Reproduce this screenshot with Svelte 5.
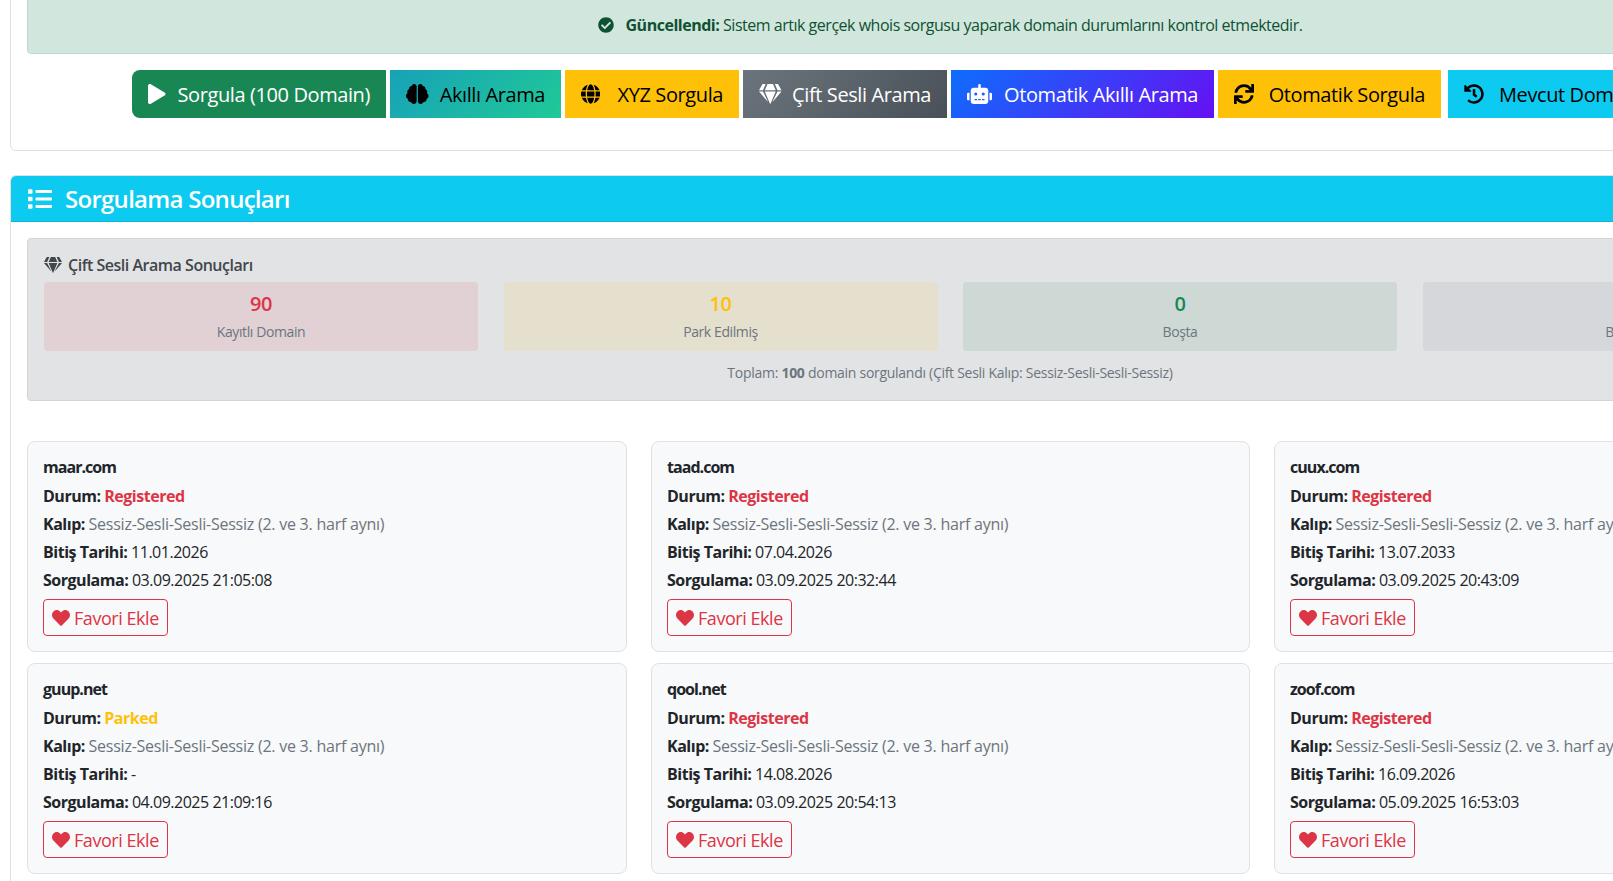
<script>
	const icons = {
		check: [512, 'M504 256c0 136.967-111.033 248-248 248S8 392.967 8 256 119.033 8 256 8s248 111.033 248 248zM227.314 387.314l184-184c6.248-6.248 6.248-16.379 0-22.627l-22.627-22.627c-6.248-6.249-16.379-6.249-22.628 0L216 308.118l-70.059-70.059c-6.248-6.248-16.379-6.248-22.628 0l-22.627 22.627c-6.248 6.248-6.248 16.379 0 22.627l104 104c6.249 6.249 16.379 6.249 22.628.001z'],
		play: [448, 'M424.4 214.7L72.4 6.6C43.8-10.3 0 6.1 0 47.9V464c0 37.5 40.7 60.1 72.4 41.3l352-208c31.4-18.5 31.5-64.1 0-82.6z'],
		list: [512, 'M80 368H16a16 16 0 0 0-16 16v64a16 16 0 0 0 16 16h64a16 16 0 0 0 16-16v-64a16 16 0 0 0-16-16zm0-320H16A16 16 0 0 0 0 64v64a16 16 0 0 0 16 16h64a16 16 0 0 0 16-16V64a16 16 0 0 0-16-16zm0 160H16a16 16 0 0 0-16 16v64a16 16 0 0 0 16 16h64a16 16 0 0 0 16-16v-64a16 16 0 0 0-16-16zm416 176H176a16 16 0 0 0-16 16v32a16 16 0 0 0 16 16h320a16 16 0 0 0 16-16v-32a16 16 0 0 0-16-16zm0-320H176a16 16 0 0 0-16 16v32a16 16 0 0 0 16 16h320a16 16 0 0 0 16-16V80a16 16 0 0 0-16-16zm0 160H176a16 16 0 0 0-16 16v32a16 16 0 0 0 16 16h320a16 16 0 0 0 16-16v-32a16 16 0 0 0-16-16z'],
		heart: [512, 'M462.3 62.6C407.5 15.9 326 24.3 275.7 76.2L256 96.5l-19.7-20.3C186.1 24.3 104.5 15.9 49.7 62.6c-62.8 53.6-66.1 149.8-9.9 207.9l193.5 199.8c12.5 12.9 32.8 12.9 45.3 0l193.5-199.8c56.3-58.1 53-154.3-9.8-207.9z'],
		gem: [576, 'M485.5 0L576 160H474.9L405.7 0h79.8zm-128 0l69.2 160H149.3L218.5 0h139zm-267 0h79.8l-69.2 160H0L90.5 0zM0 192h100.7l123 251.7c1.5 3.1-2.7 5.9-5 3.3L0 192zm148.2 0h279.6l-137 318.2c-1 2.4-4.5 2.4-5.5 0L148.2 192zm204.1 251.7l123-251.7H576L357.3 446.9c-2.3 2.7-6.5-.1-5-3.2z'],
		sync: [512, 'M440.65 12.57l4 82.77A247.16 247.16 0 0 0 255.83 8C134.73 8 33.91 94.92 12.29 209.82A12 12 0 0 0 24.09 224h49.05a12 12 0 0 0 11.67-9.26 175.91 175.91 0 0 1 317-56.94l-101.46-4.86a12 12 0 0 0-12.57 12v47.41a12 12 0 0 0 12 12H500a12 12 0 0 0 12-12V12a12 12 0 0 0-12-12h-47.37a12 12 0 0 0-11.98 12.57zM255.83 432a175.61 175.61 0 0 1-146-77.8l101.8 4.87a12 12 0 0 0 12.57-12v-47.4a12 12 0 0 0-12-12H12a12 12 0 0 0-12 12V500a12 12 0 0 0 12 12h47.35a12 12 0 0 0 12-12.6l-4.15-82.57A247.17 247.17 0 0 0 255.83 504c121.11 0 221.93-86.92 243.55-201.82a12 12 0 0 0-11.8-14.18h-49.05a12 12 0 0 0-11.67 9.26A175.86 175.86 0 0 1 255.83 432z'],
		history: [512, 'M504 255.531c.253 136.64-111.18 248.372-247.82 248.468-59.015.042-113.223-20.53-155.822-54.911-11.077-8.94-11.905-25.541-1.839-35.607l11.267-11.267c8.609-8.609 22.353-9.551 31.891-1.984C173.062 425.135 212.781 440 256 440c101.705 0 184-82.311 184-184 0-101.705-82.311-184-184-184-48.814 0-93.149 18.969-126.068 49.932l50.754 50.754c10.08 10.08 2.941 27.314-11.313 27.314H24c-8.837 0-16-7.163-16-16V38.627c0-14.254 17.234-21.393 27.314-11.314l49.372 49.372C129.209 34.136 189.552 8 256 8c136.81 0 247.747 110.78 248 247.531zm-180.912 78.784l9.823-12.63c8.138-10.463 6.253-25.542-4.21-33.679L288 256.349V152c0-13.255-10.745-24-24-24h-16c-13.255 0-24 10.745-24 24v135.651l65.409 50.874c10.463 8.137 25.541 6.253 33.679-4.21z'],
		robot: [640, 'M32,224H64V416H32A31.96166,31.96166,0,0,1,0,384V256A31.96166,31.96166,0,0,1,32,224Zm512-48V448a64.06328,64.06328,0,0,1-64,64H160a64.06328,64.06328,0,0,1-64-64V176a79.974,79.974,0,0,1,80-80H288V32a32,32,0,0,1,64,0V96H464A79.974,79.974,0,0,1,544,176ZM264,256a40,40,0,1,0-40,40A39.997,39.997,0,0,0,264,256Zm-8,128H192v32h64Zm96,0H288v32h64ZM456,256a40,40,0,1,0-40,40A39.997,39.997,0,0,0,456,256Zm-8,128H384v32h64ZM640,256V384a31.96166,31.96166,0,0,1-32,32H576V224h32A31.96166,31.96166,0,0,1,640,256Z'],
		globe: [496, 'M336.5 160C322 70.7 287.8 8 248 8s-74 62.7-88.5 152h177zM152 256c0 22.2 1.2 43.5 3.3 64h185.3c2.1-20.5 3.3-41.8 3.3-64s-1.2-43.5-3.3-64H155.3c-2.1 20.5-3.3 41.8-3.3 64zm324.7-96c-28.6-67.9-86.5-120.4-158-141.6 24.4 33.8 41.2 84.7 50 141.6h108zM177.2 18.4C105.8 39.6 47.8 92.1 19.3 160h108c8.7-56.9 25.5-107.8 49.9-141.6zM487.4 192H372.7c2.1 21 3.3 42.5 3.3 64s-1.2 43-3.3 64h114.6c5.5-20.5 8.6-41.8 8.6-64s-3.1-43.5-8.5-64zM120 256c0-21.5 1.2-43 3.3-64H8.6C3.2 212.5 0 233.8 0 256s3.2 43.5 8.6 64h114.6c-2-21-3.2-42.5-3.2-64zm39.5 96c14.5 89.3 48.7 152 88.5 152s74-62.7 88.5-152h-177zm159.3 141.6c71.4-21.2 129.4-73.7 158-141.6h-108c-8.8 56.9-25.6 107.8-50 141.6zM19.3 352c28.6 67.9 86.5 120.4 158 141.6-24.4-33.8-41.2-84.7-50-141.6h-108z'],
		brain: [576, 'M208 0c-29.9 0-54.7 20.5-61.8 48.2-.8 0-1.4-.2-2.2-.2-35.3 0-64 28.7-64 64 0 4.8.6 9.5 1.7 14C52.5 138 32 166.6 32 200c0 12.6 3.2 24.3 8.3 34.9C16.3 248.7 0 274.3 0 304c0 33.3 20.4 61.9 49.4 73.9-.9 4.6-1.4 9.3-1.4 14.1 0 39.8 32.2 72 72 72 4.1 0 8.1-.5 12-1.2 9.6 28.5 36.2 49.2 68 49.2 39.8 0 72-32.2 72-72V64c0-35.3-28.7-64-64-64zm368 304c0-29.7-16.3-55.3-40.3-69.1 5.2-10.6 8.3-22.3 8.3-34.9 0-33.4-20.5-62-49.7-74 1-4.5 1.7-9.2 1.7-14 0-35.3-28.7-64-64-64-.8 0-1.5.2-2.2.2C422.7 20.5 397.9 0 368 0c-35.3 0-64 28.6-64 64v376c0 39.8 32.2 72 72 72 31.8 0 58.4-20.7 68-49.2 3.9.7 7.9 1.2 12 1.2 39.8 0 72-32.2 72-72 0-4.8-.5-9.5-1.4-14.1 29-12 49.4-40.6 49.4-73.9z']
	};

	const buttons = [
		{ label: 'Sorgula (100 Domain)', icon: 'play', cls: 'green' },
		{ label: 'Akıllı Arama', icon: 'brain', cls: 'teal' },
		{ label: 'XYZ Sorgula', icon: 'globe', cls: 'yellow' },
		{ label: 'Çift Sesli Arama', icon: 'gem', cls: 'grey' },
		{ label: 'Otomatik Akıllı Arama', icon: 'robot', cls: 'violet' },
		{ label: 'Otomatik Sorgula', icon: 'sync', cls: 'yellow' },
		{ label: 'Mevcut Domainleri Sorgula', icon: 'history', cls: 'cyan' }
	];

	const stats = [
		{ value: 90, label: 'Kayıtlı Domain', cls: 'danger' },
		{ value: 10, label: 'Park Edilmiş', cls: 'warning' },
		{ value: 0, label: 'Boşta', cls: 'success' },
		{ value: 0, label: 'Bilinmeyen', cls: 'muted' }
	];

	const domains = [
		{ name: 'maar.com', status: 'Registered', end: '11.01.2026', query: '03.09.2025 21:05:08' },
		{ name: 'taad.com', status: 'Registered', end: '07.04.2026', query: '03.09.2025 20:32:44' },
		{ name: 'cuux.com', status: 'Registered', end: '13.07.2033', query: '03.09.2025 20:43:09' },
		{ name: 'guup.net', status: 'Parked', end: '-', query: '04.09.2025 21:09:16' },
		{ name: 'qool.net', status: 'Registered', end: '14.08.2026', query: '03.09.2025 20:54:13' },
		{ name: 'zoof.com', status: 'Registered', end: '16.09.2026', query: '05.09.2025 16:53:03' }
	];
</script>

{#snippet icon(name)}
	<svg class="icon" viewBox="0 0 {icons[name][0]} 512" fill="currentColor" aria-hidden="true">
		<path d={icons[name][1]} />
	</svg>
{/snippet}

<div class="viewport">
	<div class="page">
		<section class="card searchCard">
			<div class="alert">
				{@render icon('check')}
				<span><strong>Güncellendi:</strong> Sistem artık gerçek whois sorgusu yaparak domain durumlarını kontrol etmektedir.</span>
			</div>
			<div class="actions">
				{#each buttons as button}
					<button class="action {button.cls}">
						{@render icon(button.icon)}
						<span>{button.label}</span>
					</button>
				{/each}
			</div>
		</section>

		<section class="card results">
			<header class="resultsHeader">
				{@render icon('list')}
				<h2>Sorgulama Sonuçları</h2>
			</header>
			<div class="resultsBody">
				<div class="summary">
					<h6>{@render icon('gem')} <span>Çift Sesli Arama Sonuçları</span></h6>
					<div class="stats">
						{#each stats as stat}
							<div class="stat {stat.cls}">
								<div class="statValue">{stat.value}</div>
								<div class="statLabel">{stat.label}</div>
							</div>
						{/each}
					</div>
					<p class="total">Toplam: <strong>100</strong> domain sorgulandı (Çift Sesli Kalıp: Sessiz-Sesli-Sesli-Sessiz)</p>
				</div>

				<div class="domains">
					{#each domains as domain}
						<article class="domain">
							<div class="line name"><strong>{domain.name}</strong></div>
							<div class="line">
								<strong>Durum:</strong>
								<strong class={domain.status === 'Parked' ? 'parked' : 'registered'}>{domain.status}</strong>
							</div>
							<div class="line"><strong>Kalıp:</strong> <span class="pattern">Sessiz-Sesli-Sesli-Sessiz (2. ve 3. harf aynı)</span></div>
							<div class="line"><strong>Bitiş Tarihi:</strong> {domain.end}</div>
							<div class="line"><strong>Sorgulama:</strong> {domain.query}</div>
							<button class="favorite">{@render icon('heart')}<span>Favori Ekle</span></button>
						</article>
					{/each}
				</div>
			</div>
		</section>
	</div>
</div>

<style>
	:global(body) {
		margin: 0;
		background: #fff;
	}

	.viewport {
		width: 1613px;
		height: 881px;
		overflow: hidden;
		font-family: 'Open Sans', 'Noto Sans', sans-serif;
		color: #212529;
		letter-spacing: -0.025em;
	}

	.page {
		width: 1880px;
		margin: -21px 0 0 10px;
	}

	.icon {
		height: 1em;
		width: auto;
		flex: none;
		display: inline-block;
	}

	.card {
		box-sizing: border-box;
		border: 1px solid #dfe0e1;
		border-radius: 6px;
		background: #fff;
	}

	.searchCard {
		padding: 16px;
		margin-bottom: 24px;
	}

	.alert {
		box-sizing: border-box;
		height: 58px;
		display: flex;
		align-items: center;
		justify-content: center;
		gap: 12px;
		margin-bottom: 16px;
		border: 1px solid #badbcc;
		border-radius: 4px;
		background: #d1e7dd;
		color: #0f5132;
		font-size: 16px;
		letter-spacing: -0.03em;
	}

	.actions {
		display: flex;
		justify-content: center;
		gap: 4px;
		margin-bottom: 16px;
	}

	.action {
		box-sizing: border-box;
		height: 48px;
		display: flex;
		align-items: center;
		justify-content: space-between;
		gap: 8px;
		padding: 0 16px;
		border: 0;
		font: inherit;
		font-size: 20px;
		letter-spacing: inherit;
		white-space: nowrap;
		color: #000;
		flex: none;
	}

	.action:nth-child(1) {
		width: 254px;
		border-radius: 8px 0 0 8px;
	}

	.action:nth-child(2) {
		width: 171px;
	}

	.action:nth-child(3) {
		width: 174px;
	}

	.action:nth-child(4) {
		width: 204px;
	}

	.action:nth-child(5) {
		width: 263px;
	}

	.action:nth-child(6) {
		width: 223px;
	}

	.action:nth-child(7) {
		width: 320px;
		margin-left: 3px;
		justify-content: flex-start;
		gap: 15px;
	}

	.green {
		background: #198754;
		color: #fff;
	}

	.teal {
		background: linear-gradient(135deg, #17a2b8, #20c997);
	}

	.yellow {
		background: #ffc107;
	}

	.grey {
		background: linear-gradient(135deg, #6c757d, #495057);
		color: #fff;
	}

	.violet {
		background: linear-gradient(135deg, #0d6efd, #6610f2);
		color: #fff;
	}

	.cyan {
		background: #0dcaf0;
	}

	.resultsHeader {
		height: 46px;
		display: flex;
		align-items: center;
		gap: 13px;
		padding: 0 17px;
		background: #0dcaf0;
		color: #fff;
		font-size: 24px;
		border-radius: 5px 5px 0 0;
		border-bottom: 1px solid #0cb6d8;
		box-sizing: border-box;
	}

	h2 {
		margin: 0;
		font-size: 24px;
		font-weight: 600;
		letter-spacing: -0.03em;
	}

	.resultsBody {
		padding: 16px;
	}

	.summary {
		box-sizing: border-box;
		height: 163px;
		padding: 16px;
		border: 1px solid #d3d6d8;
		border-radius: 4px;
		background: #e2e3e5;
		color: #41464b;
		margin-bottom: 40px;
	}

	h6 {
		margin: 0 0 7px;
		font-size: 16px;
		font-weight: 600;
		line-height: 20px;
		display: flex;
		align-items: center;
		gap: 6px;
		letter-spacing: -0.03em;
	}

	.stats {
		display: grid;
		grid-template-columns: repeat(4, 434px);
		gap: 25.5px;
	}

	.stat {
		height: 69px;
		border-radius: 4px;
		text-align: center;
	}

	.statValue {
		font-size: 20px;
		font-weight: 600;
		line-height: 24px;
		padding-top: 10px;
	}

	.statLabel {
		font-size: 14px;
		line-height: 20px;
		margin-top: 6px;
		color: #6c757d;
	}

	.danger {
		background: rgba(220, 53, 69, 0.1);
		color: #dc3545;
	}

	.warning {
		background: rgba(255, 193, 7, 0.1);
		color: #ffc107;
	}

	.success {
		background: rgba(25, 135, 84, 0.1);
		color: #198754;
	}

	.muted {
		background: rgba(108, 117, 125, 0.1);
		color: #6c757d;
	}

	.total {
		margin: 12px 0 0;
		text-align: center;
		font-size: 14px;
		line-height: 20px;
		color: #6c757d;
		letter-spacing: -0.02em;
	}

	.domains {
		display: grid;
		grid-template-columns: 600px 599px 599px;
		column-gap: 24px;
		row-gap: 11px;
	}

	.domain {
		box-sizing: border-box;
		height: 211px;
		padding: 11px 15px 0;
		border: 1px solid #dee2e6;
		border-radius: 8px;
		background: #f8f9fa;
		font-size: 16px;
		letter-spacing: -0.03em;
	}

	.line {
		height: 28px;
		line-height: 28px;
		white-space: nowrap;
	}

	.line.name {
		height: 29px;
	}

	.line.name strong {
		letter-spacing: -0.06em;
	}

	.line strong {
		font-weight: 700;
		letter-spacing: -0.03em;
	}

	.registered {
		color: #dc3545;
	}

	.parked {
		color: #ffc107;
	}

	.pattern {
		color: #6c757d;
		letter-spacing: -0.015em;
	}

	.favorite {
		height: 37px;
		margin-top: 5px;
		display: inline-flex;
		align-items: center;
		gap: 4px;
		padding: 0 8px;
		border: 1px solid #dc3545;
		border-radius: 4px;
		background: transparent;
		color: #dc3545;
		font: inherit;
		font-size: 18px;
		letter-spacing: -0.025em;
	}
</style>
